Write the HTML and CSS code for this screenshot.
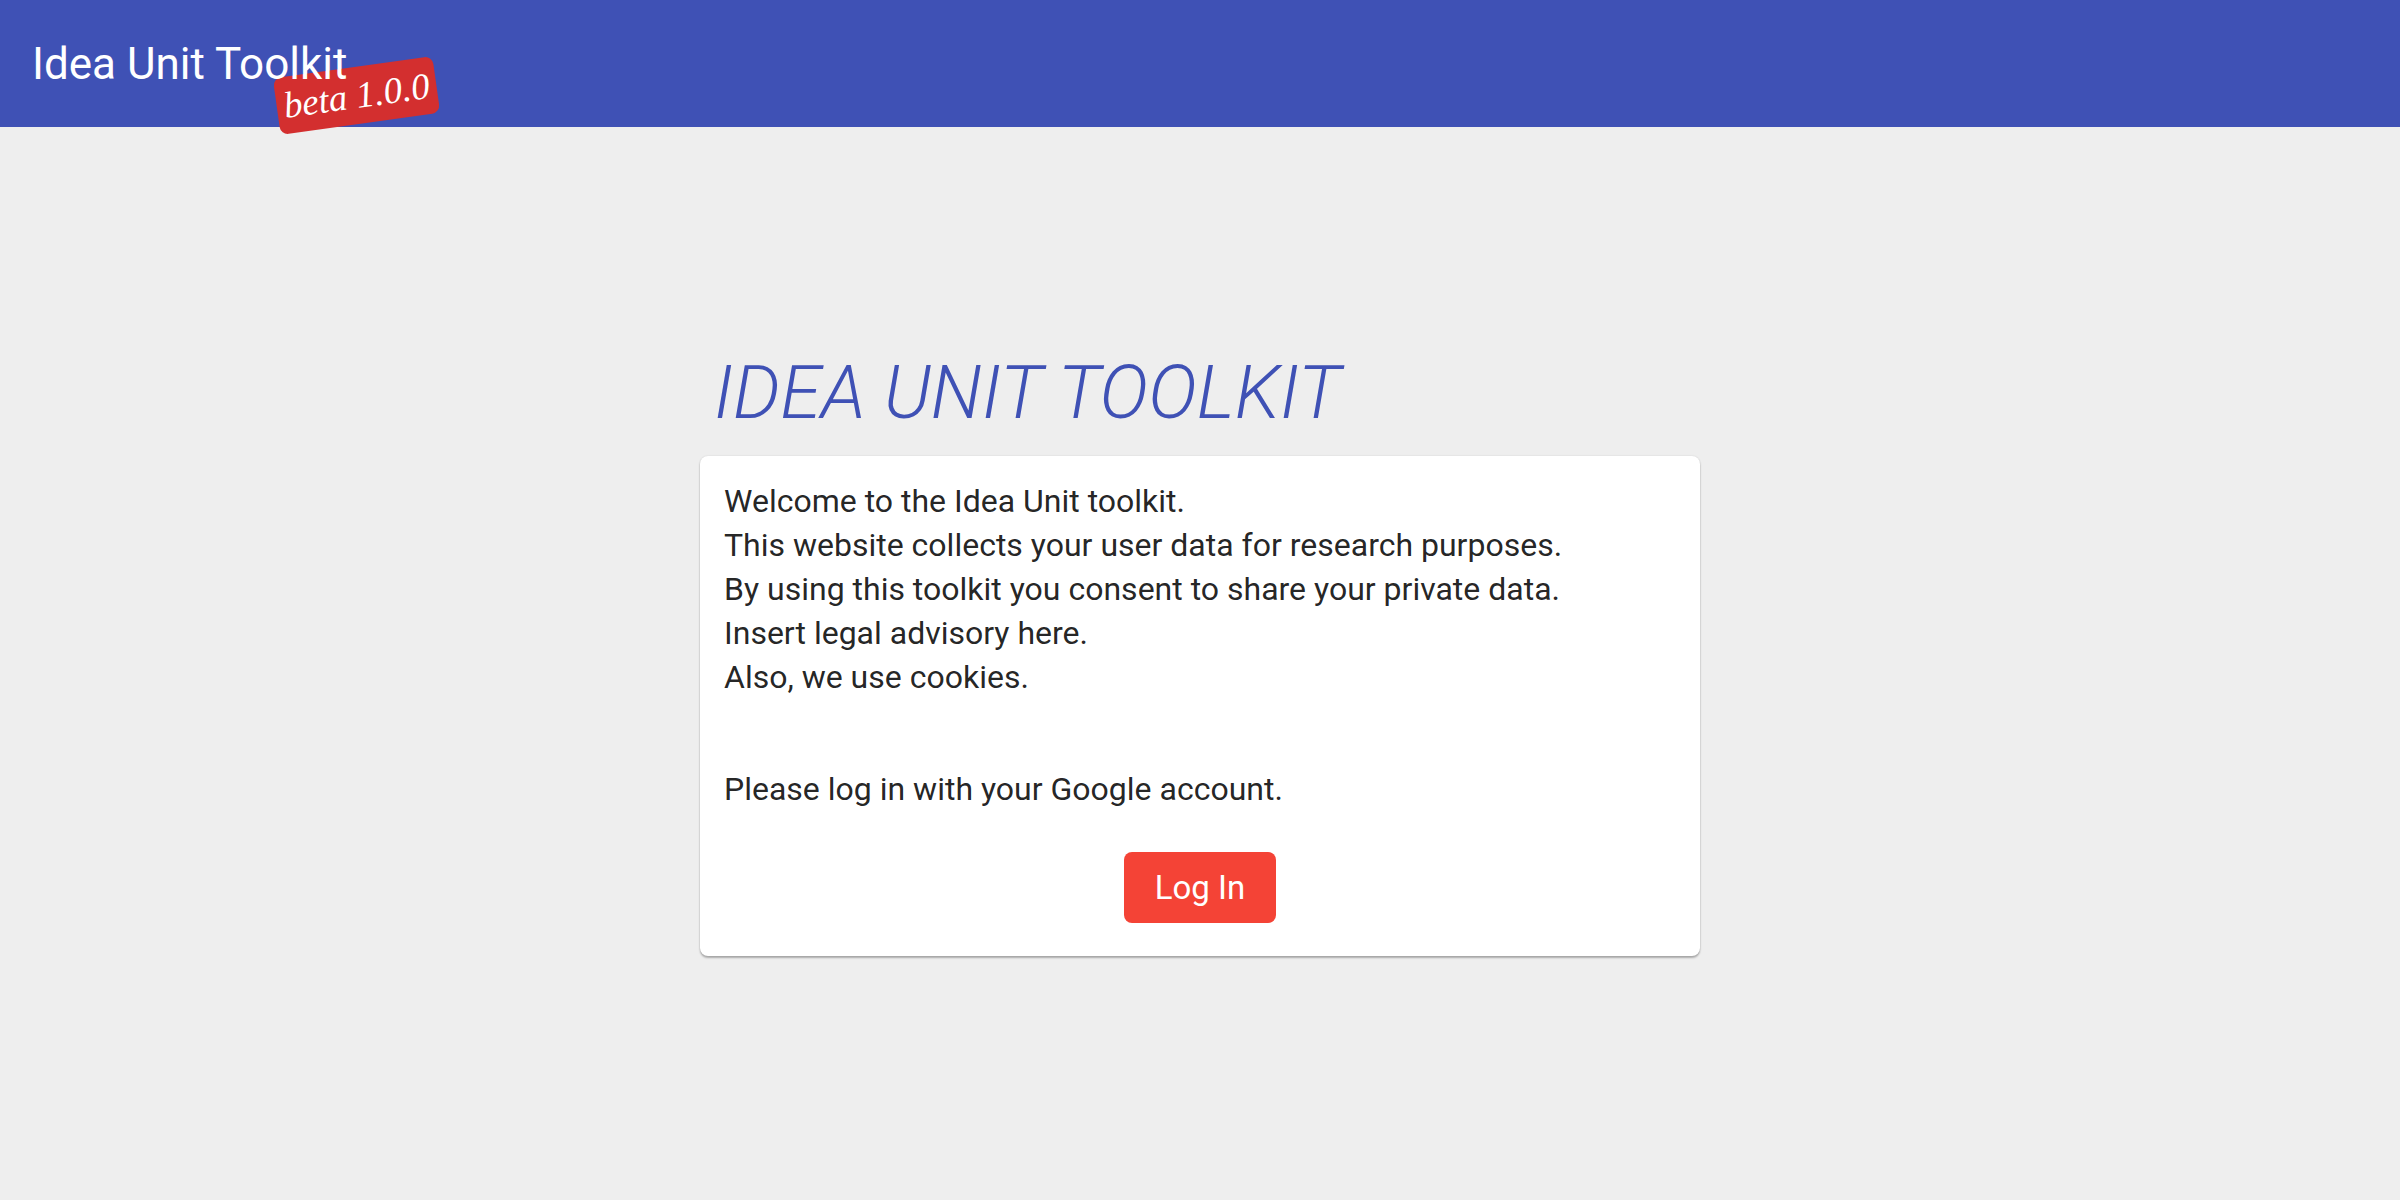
FILE: index.html
```html
<!DOCTYPE html>
<html lang="en">
<head>
<meta charset="utf-8">
<title>Idea Unit Toolkit</title>
<link rel="stylesheet" href="styles.css">
</head>
<body>
<header class="appbar">
  <div class="brand">Idea Unit Toolkit<span class="badge">beta 1.0.0</span></div>
</header>
<main class="main">
  <div class="content">
    <h1 class="heading">IDEA UNIT TOOLKIT</h1>
    <section class="card">
      <p class="intro">Welcome to the Idea Unit toolkit.<br>This website collects your user data for research purposes.<br>By using this toolkit you consent to share your private data.<br>Insert legal advisory here.<br>Also, we use cookies.<br><br></p>
      <p class="prompt">Please log in with your Google account.</p>
      <div class="actions"><button class="login" type="button">Log In</button></div>
    </section>
  </div>
</main>
</body>
</html>
```

FILE: styles.css
```css
html, body {
  margin: 0;
  padding: 0;
}
body {
  background: #eeeeee;
  font-family: Roboto, "Liberation Sans", Arial, sans-serif;
  color: rgba(0, 0, 0, 0.87);
  min-height: 1200px;
}
.appbar {
  height: 127px;
  background: #3f51b5;
  display: flex;
  align-items: center;
  padding: 0 32px;
  box-sizing: border-box;
}
.brand {
  position: relative;
  z-index: 0;
  color: #ffffff;
  font-size: 44px;
  line-height: 44px;
  font-weight: 400;
}
.badge {
  position: absolute;
  z-index: -1;
  left: 244px;
  top: 25px;
  width: 161px;
  height: 57px;
  box-sizing: border-box;
  background: #d32f2f;
  border-radius: 8px;
  color: #ffffff;
  font-family: "Liberation Serif", "Times New Roman", serif;
  font-style: italic;
  font-size: 37px;
  line-height: 57px;
  text-align: center;
  white-space: nowrap;
  transform: rotate(-8deg);
}
.main {
  display: flex;
  justify-content: center;
  padding-top: 221px;
}
.content {
  width: 1000px;
}
.heading {
  margin: 0 0 19px 0;
  padding-left: 14px;
  font-size: 74px;
  line-height: 89px;
  font-weight: 300;
  font-style: italic;
  color: #3f51b5;
}
.card {
  background: #ffffff;
  border-radius: 8px;
  box-shadow: 0 2px 2px rgba(0, 0, 0, 0.28), 0 0 2px rgba(0, 0, 0, 0.12);
  padding: 23px 24px 33px 24px;
  height: 500px;
  box-sizing: border-box;
}
.intro, .prompt {
  margin: 0;
  font-size: 32px;
  line-height: 44px;
}
.intro {
  margin-bottom: 24px;
}
.actions {
  display: flex;
  justify-content: center;
  margin-top: 41px;
}
.login {
  width: 152px;
  height: 71px;
  border: none;
  border-radius: 8px;
  background: #f44336;
  color: #ffffff;
  font-family: Roboto, "Liberation Sans", Arial, sans-serif;
  font-size: 33px;
  padding: 0;
}
```
